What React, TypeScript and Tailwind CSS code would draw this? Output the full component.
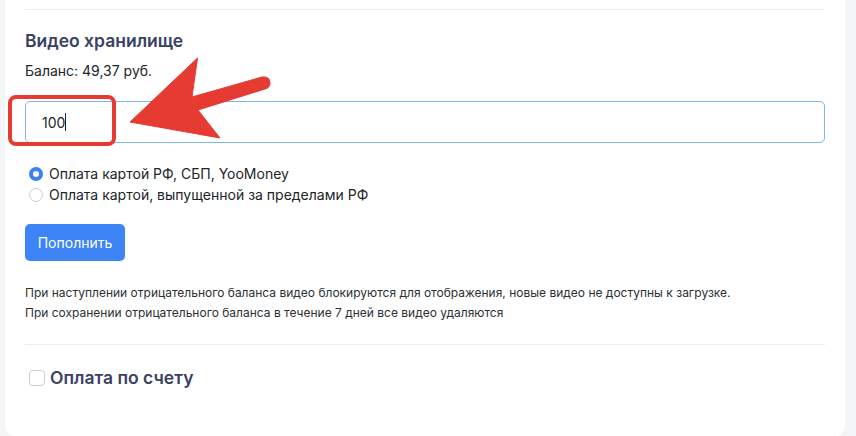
import React from "react";

export default function App() {
  return (
    <div className="relative w-[856px] h-[436px] overflow-hidden bg-[#f4f5f7] px-[5px] font-['Inter',sans-serif] text-[#212529]">
      <div className="bg-white rounded-b-xl px-5 pt-[9px] pb-[48px] w-[840px]">
        {/* top divider */}
        <div className="h-px bg-[#ebedf0]" />

        <div className="mt-[20px] text-[17.5px] leading-[22px] font-semibold text-[#3a4263]">Видео хранилище</div>
        <div className="mt-[10px] text-[14px] leading-[18px]">Баланс: 49,37 руб.</div>

        <div className="mt-[21px] h-[42px] rounded-[5px] border border-[#7db6ec] flex items-center pl-[16px] text-[14px]">
          <span>100</span>
          <span className="w-px h-[18px] bg-[#212529]" />
        </div>

        {/* payment type */}
        <div className="mt-[24px] flex flex-col gap-[7px] pl-[4px] text-[14px] leading-[14px]">
          <label className="flex items-center gap-[6px]">
            <span className="w-[14px] h-[14px] rounded-full bg-[#3b82f6] flex items-center justify-center">
              <span className="w-[6px] h-[6px] rounded-full bg-white" />
            </span>
            Оплата картой РФ, СБП, YooMoney
          </label>
          <label className="flex items-center gap-[6px]">
            <span className="w-[14px] h-[14px] rounded-full border border-[#c9ccd1] bg-white" />
            Оплата картой, выпущенной за пределами РФ
          </label>
        </div>

        <button className="mt-[22px] h-[37px] w-[100px] rounded-[5px] bg-[#3d84f6] text-white text-[14px]">Пополнить</button>

        <div className="mt-[22px] text-[12px] leading-[20px] text-[#2b2f33]">
          <p>При наступлении отрицательного баланса видео блокируются для отображения, новые видео не доступны к загрузке.</p>
          <p>При сохранении отрицательного баланса в течение 7 дней все видео удаляются</p>
        </div>

        <div className="mt-[21px] h-px bg-[#ebedf0]" />

        <label className="mt-[22px] flex items-center gap-[5px] pl-[4px]">
          <span className="w-[16px] h-[16px] rounded-[4px] border border-[#c9ccd1] bg-white" />
          <span className="text-[17.5px] leading-[22px] font-semibold text-[#3a4263]">Оплата по счету</span>
        </label>
      </div>

      {/* annotation */}
      <svg className="absolute inset-0 pointer-events-none" width="856" height="436" viewBox="0 0 856 436">
        <rect x="10" y="97" width="104" height="47" rx="6" fill="none" stroke="#e53b32" strokeWidth="4" />
        <path
          d="M130 122 L197.5 58 L192 97 L262 77 Q270 76 270 83 Q270 88 265 89 L198 110 L220 138 Z"
          fill="#e53b32"
          stroke="#e53b32"
          strokeWidth="1"
          strokeLinejoin="round"
        />
      </svg>
    </div>
  );
}
